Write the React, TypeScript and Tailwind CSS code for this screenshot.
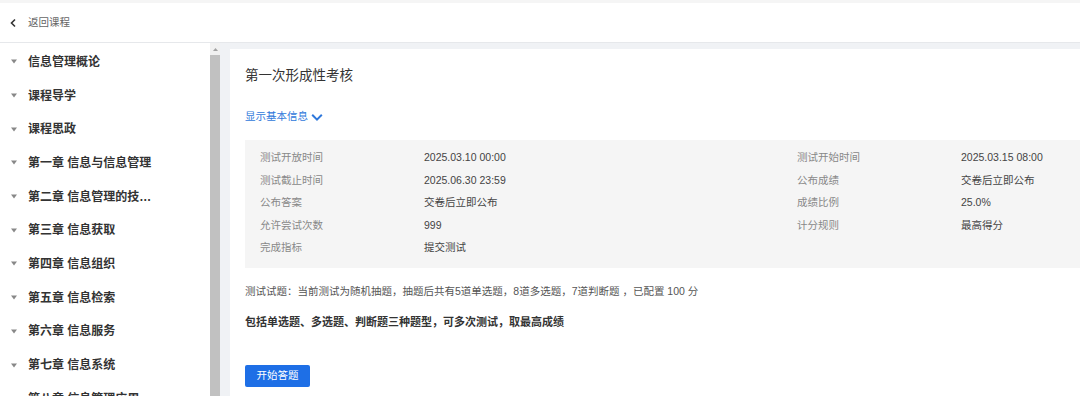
const chapters = [
  '信息管理概论',
  '课程导学',
  '课程思政',
  '第一章 信息与信息管理',
  '第二章 信息管理的技术基础',
  '第三章 信息获取',
  '第四章 信息组织',
  '第五章 信息检索',
  '第六章 信息服务',
  '第七章 信息系统',
  '第八章 信息管理应用',
];

const leftInfo = [
  ['测试开放时间', '2025.03.10 00:00'],
  ['测试截止时间', '2025.06.30 23:59'],
  ['公布答案', '交卷后立即公布'],
  ['允许尝试次数', '999'],
  ['完成指标', '提交测试'],
];

const rightInfo = [
  ['测试开始时间', '2025.03.15 08:00'],
  ['公布成绩', '交卷后立即公布'],
  ['成绩比例', '25.0%'],
  ['计分规则', '最高得分'],
];

function InfoCol({ rows }: { rows: string[][] }) {
  return (
    <div className="flex flex-col">
      {rows.map(([k, v]) => (
        <div key={k} className="flex h-[22.5px] items-center">
          <span className="w-[164px] shrink-0 text-[#888]">{k}</span>
          <span className="text-[#444]">{v}</span>
        </div>
      ))}
    </div>
  );
}

export default function App() {
  return (
    <div
      className="flex h-[396px] w-[1080px] flex-col overflow-hidden bg-white text-[10.5px]"
      style={{ fontFamily: '"Liberation Sans", "Noto Sans CJK SC", sans-serif' }}
    >
      <header className="flex h-[43px] shrink-0 items-center border-t-[3px] border-b border-t-[#f5f5f5] border-b-[#e6e8eb] bg-white pl-[9px]">
        <svg width="9" height="10" viewBox="0 0 9 10" className="mr-[10px]">
          <path d="M6 1.5 L2.5 5 L6 8.5" fill="none" stroke="#333" strokeWidth="1.6" />
        </svg>
        <span className="text-[#666]">返回课程</span>
      </header>

      <div className="flex min-h-0 flex-1">
        <aside className="w-[210px] shrink-0 bg-white pt-[2px]">
          {chapters.map((c) => (
            <div key={c} className="flex h-[33.7px] items-center">
              <svg width="6" height="5" viewBox="0 0 6 5" className="ml-[11px] mr-[11px] shrink-0">
                <path d="M0 0.5 H6 L3 4.5 Z" fill="#888" />
              </svg>
              <span className="w-[126px] truncate text-[12px] font-bold text-[#333]">{c}</span>
            </div>
          ))}
        </aside>

        <div className="flex w-[10px] shrink-0 flex-col bg-[#f1f1f1]">
          <div className="flex h-[12px] items-center justify-center">
            <svg width="5" height="3" viewBox="0 0 5 3">
              <path d="M2.5 0 L5 3 H0 Z" fill="#a3a3a3" />
            </svg>
          </div>
          <div className="flex-1 bg-[#c1c1c1]" />
        </div>

        <main className="min-w-0 flex-1 bg-[#f0f2f5] pl-[10px] pt-[6px]">
          <div className="h-full w-[900px] bg-white pl-[15px] pt-[17px]">
            <h1 className="flex h-[20px] items-center text-[13.5px] text-[#333]">第一次形成性考核</h1>
            <div className="mt-[24px] flex h-[14px] items-center text-[#2f78db]">
              显示基本信息
              <svg width="12" height="9" viewBox="0 0 12 9" className="ml-[3px]">
                <path d="M1.2 1.8 L6 6.6 L10.8 1.8" fill="none" stroke="#2f78db" strokeWidth="2" />
              </svg>
            </div>
            <div className="mt-[16px] flex h-[128px] bg-[#f5f5f5] pl-[15px] pt-[7px]">
              <div className="w-[537px]">
                <InfoCol rows={leftInfo} />
              </div>
              <InfoCol rows={rightInfo} />
            </div>
            <p className="mt-[16px] flex h-[16px] items-center text-[#555]">
              测试试题：当前测试为随机抽题，抽题后共有5道单选题，8道多选题，7道判断题 ，已配置 100 分
            </p>
            <p className="mt-[14px] flex h-[16px] items-center text-[11px] font-bold text-[#333]">
              包括单选题、多选题、判断题三种题型，可多次测试，取最高成绩
            </p>
            <button className="mt-[35px] h-[22px] w-[65px] rounded-[2px] bg-[#1e6fe6] text-white">开始答题</button>
          </div>
        </main>
      </div>
    </div>
  );
}
